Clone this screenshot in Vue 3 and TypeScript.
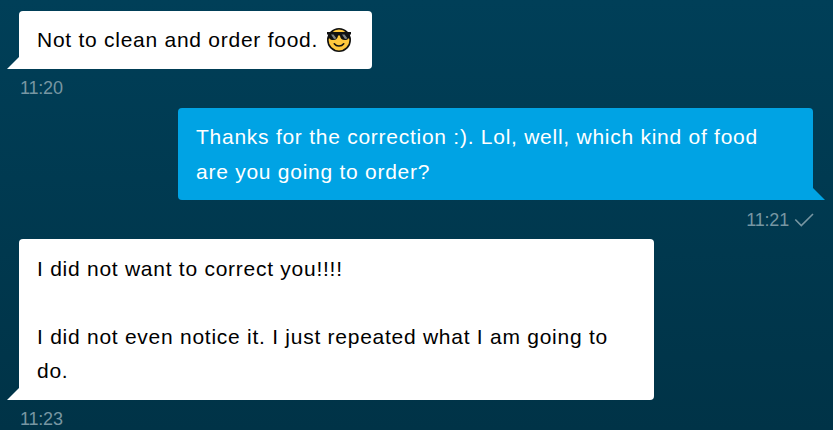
<script setup lang="ts">
interface Message {
  id: number
  lines: string[]
  time: string
  own: boolean
  emoji?: boolean
}

const messages: Message[] = [
  { id: 1, lines: ['Not to clean and order food.'], time: '11:20', own: false, emoji: true },
  {
    id: 2,
    lines: ['Thanks for the correction :). Lol, well, which kind of food', 'are you going to order?'],
    time: '11:21',
    own: true,
  },
  {
    id: 3,
    lines: [
      'I did not want to correct you!!!!',
      '',
      'I did not even notice it. I just repeated what I am going to',
      'do.',
    ],
    time: '11:23',
    own: false,
  },
]
</script>

<template>
  <main class="chat">
    <article v-for="m in messages" :key="m.id" class="message" :class="{ own: m.own, short: m.emoji }">
      <div class="bubble">
        <div v-for="(line, i) in m.lines" :key="i" class="line">
          <span>{{ line }}</span>
          <svg v-if="m.emoji" class="emoji" viewBox="0 0 26 26" aria-hidden="true">
            <circle cx="13" cy="13" r="11.2" fill="#ffc83d" stroke="#111" stroke-width="1.6" />
            <path d="M1 5h24v2.500h-1.300c-.2 4-1.700 5.500-4.800 5.500-3 0-4.500-1.500-5-4.500h-1.800c-.5 3-2 4.500-5 4.500-3.100 0-4.600-1.500-4.800-5.500H1z" fill="#111" />
            <path d="M5 7.500h2.500l3 4-2.500.6zM16 7.500h2.500l3 4-2.500.6z" fill="#7d8284" />
            <path d="M8.300 16.700c2.200 3 7.200 3 9.400 0" fill="none" stroke="#111" stroke-width="1.500" stroke-linecap="round" />
          </svg>
        </div>
      </div>
      <div class="meta">
        <time>{{ m.time }}</time>
        <svg v-if="m.own" class="check" viewBox="0 0 20 14" aria-hidden="true">
          <path d="M1.300 6.500 7.300 12.500 19 1" fill="none" stroke="currentColor" stroke-width="1.600" />
        </svg>
      </div>
    </article>
  </main>
</template>

<style>
body {
  margin: 0;
  overflow: hidden;
}
</style>

<style scoped>
.chat {
  box-sizing: border-box;
  width: 100%;
  height: 430px;
  padding: 11px 20px 0 19px;
  overflow: hidden;
  display: flex;
  flex-direction: column;
  background: linear-gradient(#003f58, #003347);
  font-family: 'Liberation Sans', Arial, sans-serif;
}

.message {
  display: flex;
  flex: none;
  flex-direction: column;
  align-items: flex-start;
}

.message.own {
  align-items: flex-end;
}

.bubble {
  position: relative;
  box-sizing: border-box;
  width: 635px;
  height: 161px;
  padding: 12px 18px;
  border-radius: 4px 4px 4px 0;
  background: #fff;
  color: #000;
  font-size: 21px;
  line-height: 34px;
  letter-spacing: 0.74px;
  white-space: nowrap;
}

.message:last-child .bubble {
  padding-top: 13px;
}

.short .bubble {
  width: 353px;
  height: 58px;
}

.own .bubble {
  height: 92px;
  padding-top: 11px;
  line-height: 35px;
  border-radius: 4px 4px 0 4px;
  background: #00a3e4;
  color: #fff;
}

.bubble::after {
  content: '';
  position: absolute;
  bottom: 0;
  left: -12px;
  width: 12px;
  height: 12px;
  background: inherit;
  clip-path: polygon(100% 0, 100% 100%, 0 100%);
}

.own .bubble::after {
  right: -12px;
  left: auto;
  clip-path: polygon(0 0, 100% 100%, 0 100%);
}

.line {
  display: flex;
  align-items: center;
  height: 34px;
}

.own .line {
  height: 35px;
}

.emoji {
  flex: none;
  width: 26px;
  height: 26px;
  margin-left: 8px;
}

.meta {
  display: flex;
  align-items: center;
  gap: 6px;
  height: 39px;
  padding-left: 1px;
  color: #7796a2;
  font-size: 18px;
  letter-spacing: -0.2px;
  line-height: 39px;
}

.own .meta {
  box-sizing: border-box;
  gap: 5px;
  padding-top: 1px;
}

.check {
  width: 20px;
  height: 14px;
  margin-right: -1px;
}
</style>
